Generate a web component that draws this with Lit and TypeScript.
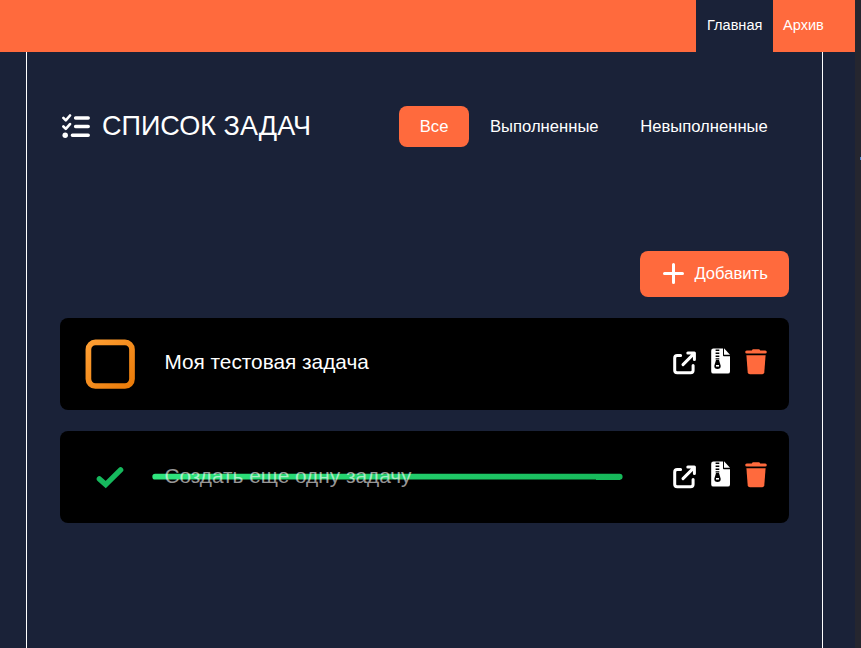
import { LitElement, html, css } from "lit";
import { customElement } from "lit/decorators.js";

const listIcon = html`<svg class="list" viewBox="0 0 28 26" fill="none" stroke="#fff" stroke-linecap="round" stroke-linejoin="round">
  <g stroke-width="3.5"><path d="M13.6 5H26.2M13.6 13.6H26.2M10.4 22.2H26.2" /></g>
  <g stroke-width="2.6"><path d="M1.4 4.9L3.8 7.3L8 2.5M1.4 13.5L3.8 15.9L8 11.1" /></g>
  <circle cx="3.2" cy="22.2" r="2.7" fill="#fff" stroke="none" />
</svg>`;

const plusIcon = html`<svg class="plus" viewBox="0 0 21 21" fill="none" stroke="#fff" stroke-width="3" stroke-linecap="round">
  <path d="M10.5 1.5V19.5M1.5 10.5H19.5" />
</svg>`;

const openIcon = html`<svg class="open" viewBox="0 0 24 24" fill="none" stroke="#fff" stroke-width="3" stroke-linecap="round" stroke-linejoin="round">
  <path d="M7.6 4.6H4.2Q1.7 4.6 1.7 7.1V19.2Q1.7 21.7 4.2 21.7H17.6Q20.1 21.7 20.1 19.2V14.6" />
  <path d="M10 13.6L21 2.6M14.8 2H21.4V8.6" />
</svg>`;

const zipIcon = html`<svg class="zip" viewBox="0 0 19 26">
  <path fill="#fff" d="M2.4 0.5H12V7.4Q12 8.2 12.8 8.2H19V23.4Q19 25.6 16.8 25.6H2.4Q0.2 25.6 0.2 23.4V2.7Q0.2 0.5 2.4 0.5Z" />
  <path fill="#fff" d="M13 0.2L19 6.8H13Z" />
  <path stroke="#000" stroke-width="1.4" d="M4.6 2.2H8.3M4.6 5.2H8.3M4.6 8.2H8.3M4.6 10.9H8.3" />
  <path fill="#000" d="M5 12H8L9.6 17.4C10.1 19.6 8.5 21 6.5 21S2.9 19.6 3.4 17.4Z" />
  <path stroke="#fff" stroke-width="1.6" d="M5 17.8H8" />
</svg>`;

const trashIcon = html`<svg class="trash" viewBox="0 0 22 26" fill="#ff6a3d">
  <path d="M6.8 1.4L7.4 .6Q7.7 .2 8.3 .2H13.7Q14.3 .2 14.6 .6L15.2 1.4H20.2Q21.8 1.4 21.8 3T20.2 4.6H1.8Q.2 4.6 .2 3T1.8 1.4Z" />
  <path d="M1.4 6.2H20.6L19.3 23.2Q19.1 25.3 17 25.3H5Q2.9 25.3 2.7 23.2Z" />
</svg>`;

const boxIcon = html`<svg class="box" viewBox="0 0 50 50">
  <defs><linearGradient id="amber" x1="0" y1="0" x2="1" y2="1"><stop offset="0" stop-color="#ff9f33" /><stop offset="1" stop-color="#ea7b09" /></linearGradient></defs>
  <rect x="3.4" y="3.4" width="43.6" height="43.6" rx="7" fill="none" stroke="url(#amber)" stroke-width="5.7" />
</svg>`;

const checkIcon = html`<svg class="check" viewBox="0 0 28 22" fill="none" stroke="#16b85d" stroke-width="5.4" stroke-linecap="round">
  <path d="M3.4 11.9L9.7 17.6L24.6 2.9" />
</svg>`;

const strike = html`<svg class="strike" viewBox="0 0 471 7">
  <defs><linearGradient id="green" gradientUnits="userSpaceOnUse" x1="0" y1="0" x2="471" y2="0"><stop offset="0" stop-color="#30e57e" /><stop offset="1" stop-color="#16b85a" /></linearGradient></defs>
  <path fill="url(#green)" d="M3.2 .8H467.6A3 3.05 0 0 1 467.6 6.9H444V6.5H3.2A2.85 2.85 0 0 1 3.2 .8Z" />
</svg>`;

@customElement("app-root")
export class AppRoot extends LitElement {
  static styles = css`
    :host {
      display: block;
      position: relative;
      height: 648px;
      overflow: hidden;
      background: #25262f;
      color: #fff;
      font-family: "Liberation Sans", Arial, sans-serif;
      font-size: 20.8px;
    }
    .page { width: 855px; height: 648px; background: #1a2238; display: flex; flex-direction: column; }
    .edge { position: absolute; right: 0; top: 157px; width: 1px; height: 3px; background: #4c8ad0; }
    nav { height: 52px; flex: none; background: #ff6a3d; display: flex; justify-content: flex-end; font-size: 14.56px; line-height: 51px; }
    nav span { box-sizing: border-box; white-space: nowrap; }
    .current { width: 77px; padding-left: 11px; background: #1a2238; }
    .archive { width: 82px; padding-left: 10px; }
    main { box-sizing: border-box; width: 797px; flex: 1; margin-left: 26px; padding: 54px 33px 0; border: solid #fff; border-width: 0 1px; }
    header { display: flex; align-items: center; height: 41px; }
    h1 { margin: 0 auto 2px 12.4px; font-size: 27.04px; font-weight: 400; line-height: 40px; white-space: nowrap; }
    .filters { display: flex; margin-right: 0.4px; font-size: 16.64px; line-height: 41px; }
    .filters span { padding: 0 20.8px; border-radius: 8px; white-space: nowrap; }
    .filters .on { background: #ff6a3d; }
    .add { display: flex; align-items: center; box-sizing: border-box; width: 149px; height: 46px; margin: 104px 0 21px auto; padding-left: 23px; gap: 10.4px; border-radius: 8px; background: #ff6a3d; font-size: 16.64px; white-space: nowrap; }
    .task { position: relative; display: flex; height: 92px; margin-bottom: 21px; border-radius: 8px; background: #000; }
    .mark { width: 104.4px; flex: none; display: flex; }
    .label { position: relative; flex: 1; line-height: 88px; white-space: nowrap; }
    .done .label { color: rgba(255, 255, 255, 0.6); line-height: 90px; }
    .actions { display: flex; padding: 30.6px 22.5px 0 0; }
    svg { display: block; flex: none; }
    .list { width: 28px; height: 26px; margin: 0 0 2px 1.6px; }
    .plus { width: 21px; height: 21px; margin-bottom: 1px; }
    .box { width: 50px; height: 50px; margin: 21px 0 0 25px; }
    .check { width: 28px; height: 22px; margin: 35.5px 0 0 36.3px; }
    .strike { position: absolute; left: 92px; top: 42px; width: 471px; height: 7px; }
    .open { width: 24px; height: 24px; margin: 2.6px 14px 0 0; }
    .zip { width: 19px; height: 26px; margin: -0.4px 15px 0 0; }
    .trash { width: 22px; height: 26px; }
    .done .open { margin-top: 3.6px; }
  `;

  private task(title: string, done: boolean) {
    return html`<section class="task ${done ? "done" : ""}">
      ${done ? strike : ""}
      <div class="mark">${done ? checkIcon : boxIcon}</div>
      <div class="label">${title}</div>
      <div class="actions">${openIcon}${zipIcon}${trashIcon}</div>
    </section>`;
  }

  render() {
    return html`<div class="page">
      <nav><span class="current">Главная</span><span class="archive">Архив</span></nav>
      <main>
        <header>
          ${listIcon}
          <h1>СПИСОК ЗАДАЧ</h1>
          <div class="filters"><span class="on">Все</span><span>Выполненные</span><span>Невыполненные</span></div>
        </header>
        <div class="add">${plusIcon}<span>Добавить</span></div>
        ${this.task("Моя тестовая задача", false)}
        ${this.task("Создать еще одну задачу", true)}
      </main>
    </div>
    <div class="edge"></div>`;
  }
}
